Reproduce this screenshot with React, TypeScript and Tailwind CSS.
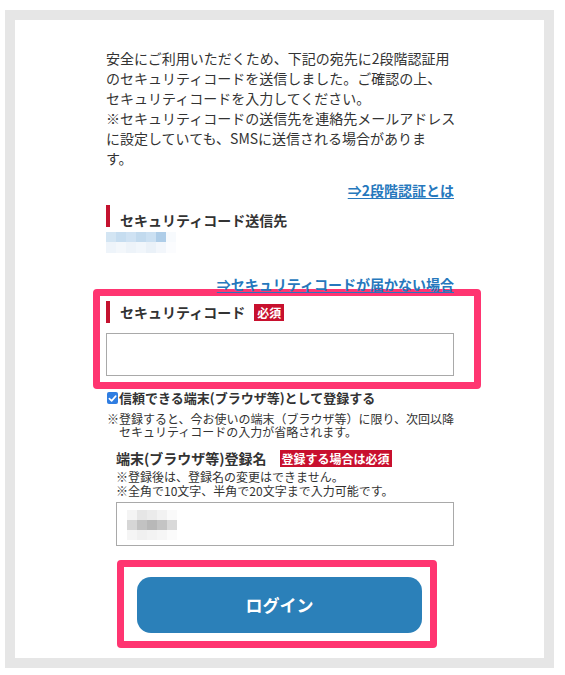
const emailTop = ['bg-[#d3e5f3]', 'bg-[#c6ddf0]', 'bg-[#cfe2f3]', 'bg-[#c2daee]', 'bg-[#cbe0f2]', 'bg-[#aecde8]', 'bg-[#f7fafd]'];
const emailBottom = ['bg-[#eef4fa]', 'bg-[#f3f7fb]', 'bg-[#edf3f9]', 'bg-[#f1f6fb]', 'bg-[#eaf1f8]', 'bg-[#f2f6fb]', 'bg-[#fbfcfe]'];
const devTop = ['bg-[#f4f4f4]', 'bg-[#e6e6e6]', 'bg-[#ebebeb]', 'bg-[#f2f2f2]', 'bg-[#fafafa]'];
const devMid = ['bg-[#d6d6d6]', 'bg-[#c2c2c2]', 'bg-[#b8b8b8]', 'bg-[#c4c4c4]', 'bg-[#d9d9d9]'];
const devBottom = ['bg-[#f5f5f5]', 'bg-[#f0f0f0]', 'bg-[#f3f3f3]', 'bg-[#f6f6f6]', 'bg-[#fbfbfb]'];

function Row({ cells, h }: { cells: string[]; h: string }) {
  return (
    <div className="flex">
      {cells.map((c, i) => (
        <div key={i} className={`w-[10px] ${h} ${c}`} />
      ))}
    </div>
  );
}

export default function App() {
  return (
    <div className="min-h-screen bg-white font-['Noto_Sans_CJK_JP',sans-serif] text-[#333]">
      <div className="pl-[5px] pt-[10px]">
        <div className="h-[658px] w-[549px] bg-[#e6e6e6] p-[10px]">
          <div className="h-full bg-white pl-[91px]">
            <div className="w-[348px] pt-[28px]">
              <p className="whitespace-nowrap text-[14px] leading-[20px]">
                安全にご利用いただくため、下記の宛先に2段階認証用
                <br />
                のセキュリティコードを送信しました。ご確認の上、
                <br />
                セキュリティコードを入力してください。
                <br />
                ※セキュリティコードの送信先を連絡先メールアドレス
                <br />
                に設定していても、SMSに送信される場合がありま
                <br />
                す。
              </p>

              <div className="mt-[12px] text-right text-[14px] leading-[20px]">
                <a className="font-bold text-[#2678bd] underline underline-offset-2">⇒2段階認証とは</a>
              </div>

              <div className="mt-[5px] flex h-[22px] items-end border-l-4 border-[#c4122f] pl-[10px]">
                <span className="text-[14px] font-bold leading-[14px]">セキュリティコード送信先</span>
              </div>

              <div className="mt-[5px] flex flex-col">
                <Row cells={emailTop} h="h-[10px]" />
                <Row cells={emailBottom} h="h-[11px]" />
              </div>

              <div className="mt-[24px] text-right text-[14px] leading-[14px]">
                <a className="font-bold text-[#2678bd] underline underline-offset-2">⇒セキュリティコードが届かない場合</a>
              </div>

              <div className="mr-[-27px] ml-[-13px] mt-[-2px] rounded-[4px] border-[7px] border-[#ff3571] pb-[6px] pl-[6px] pr-[20px] pt-[5px]">
                <div className="flex h-[22px] items-center border-l-4 border-[#c4122f] pl-[10px]">
                  <span className="text-[14px] font-bold leading-[14px]">セキュリティコード</span>
                  <span className="ml-[9px] h-[17px] bg-[#c8102e] px-[3px] text-[12px] font-bold leading-[17px] text-white">
                    必須
                  </span>
                </div>
                <div className="mt-[10px] h-[43px] w-full border border-[#a9a9a9] bg-white" />
              </div>

              <div className="mt-[1px] flex h-[16px] items-center pl-[1px]">
                <div className="flex h-[12px] w-[11px] items-center justify-center rounded-[2px] bg-[#2f7de1]">
                  <svg width="9" height="9" viewBox="0 0 10 10">
                    <path d="M1.5 5.2 L4 7.6 L8.6 2.4" fill="none" stroke="white" strokeWidth="1.8" strokeLinecap="round" strokeLinejoin="round" />
                  </svg>
                </div>
                <span className="ml-[1px] whitespace-nowrap text-[13px] font-bold leading-[16px]">
                  信頼できる端末(ブラウザ等)として登録する
                </span>
              </div>

              <div className="mt-[6px] whitespace-nowrap pl-[1px] text-[12px] leading-[13px]">
                <div>※登録すると、今お使いの端末（ブラウザ等）に限り、次回以降</div>
                <div className="pl-[12px]">セキュリティコードの入力が省略されます。</div>
              </div>

              <div className="ml-[10px]">
                <div className="mt-[12px] flex h-[17px] items-center">
                  <span className="whitespace-nowrap text-[14px] font-bold leading-[17px]">端末(ブラウザ等)登録名</span>
                  <span className="ml-[13px] h-[17px] whitespace-nowrap bg-[#c8102e] px-[2px] text-[12px] font-bold leading-[17px] text-white">
                    登録する場合は必須
                  </span>
                </div>

                <div className="mt-[3px] whitespace-nowrap text-[12px] leading-[14px]">
                  <div>※登録後は、登録名の変更はできません。</div>
                  <div>※全角で10文字、半角で20文字まで入力可能です。</div>
                </div>

                <div className="mt-[4px] h-[44px] w-full border border-[#a9a9a9] bg-white pl-[10px] pt-[7px]">
                  <div className="flex flex-col">
                    <Row cells={devTop} h="h-[10px]" />
                    <Row cells={devMid} h="h-[10px]" />
                    <Row cells={devBottom} h="h-[10px]" />
                  </div>
                </div>

                <div className="ml-[1px] mt-[14px] h-[88px] w-[320px] rounded-[4px] border-[7px] border-[#ff3571] pl-[13px] pt-[10px]">
                  <button className="flex h-[56px] w-[285px] items-center justify-center rounded-[14px] bg-[#2b80b9] text-[17px] font-bold text-white">
                    ログイン
                  </button>
                </div>
              </div>
            </div>
          </div>
        </div>
      </div>
    </div>
  );
}
